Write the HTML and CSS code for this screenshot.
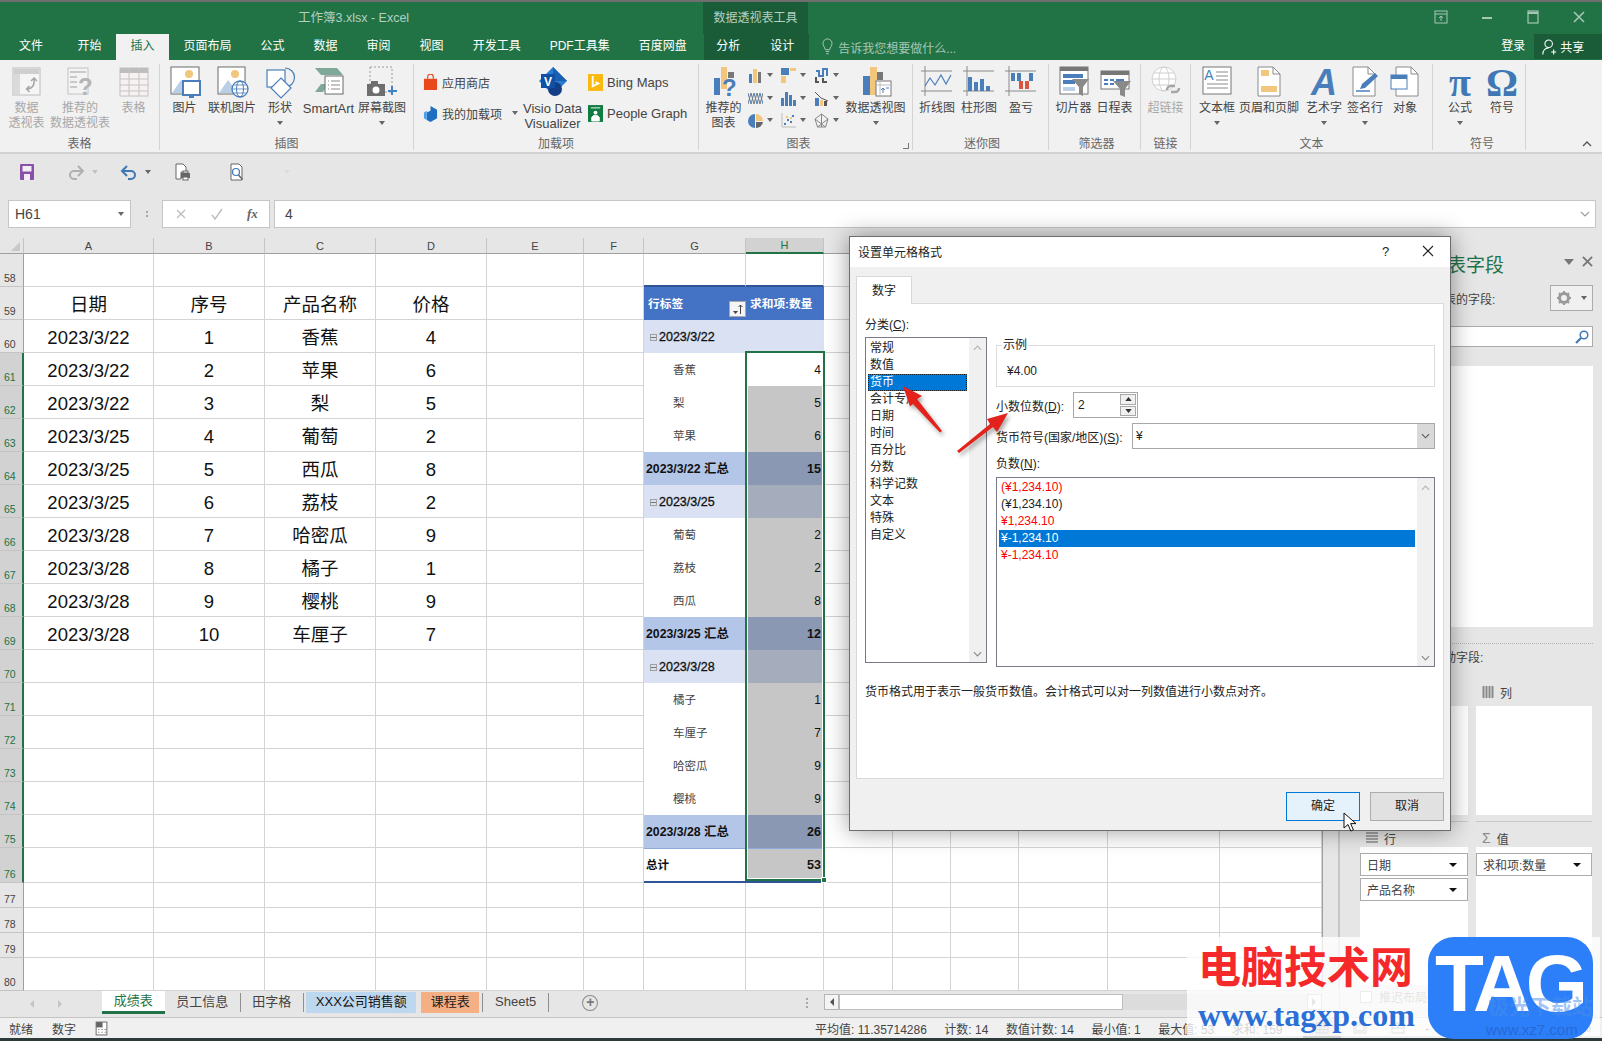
FILE: index.html
```html
<!DOCTYPE html>
<html lang="zh-CN">
<head>
    <meta charset="UTF-8">
    <title>工作簿3.xlsx - Excel</title>
    <link rel="stylesheet" href="styles.css">
</head>
<body>
<div class="titlebar">
    <div class="doc-title">工作簿3.xlsx - Excel</div>
    <div class="tool-label">数据透视表工具</div>
    <div class="win-btns">
        <svg viewBox="0 0 14 14"><rect x="1" y="1" width="12" height="12" fill="none" stroke="#a5c7b4"/><path d="M1 4h12M7 11V6M5 8l2-2 2 2" fill="none" stroke="#a5c7b4"/></svg>
        <svg viewBox="0 0 14 14"><path d="M2 8h10" stroke="#a5c7b4" stroke-width="2"/></svg>
        <svg viewBox="0 0 14 14"><rect x="2" y="1" width="10" height="12" fill="none" stroke="#a5c7b4" stroke-width="1.2"/><path d="M2 3h10" stroke="#a5c7b4" stroke-width="2"/></svg>
        <svg viewBox="0 0 14 14"><path d="M2 2l10 10M12 2L2 12" stroke="#a5c7b4" stroke-width="1.6"/></svg>
    </div>
</div>
<div class="tabbar">
    <div class="tab">文件</div>
    <div class="tab tab-first">开始</div>
    <div class="tab tab-on">插入</div>
    <div class="tab">页面布局</div>
    <div class="tab">公式</div>
    <div class="tab">数据</div>
    <div class="tab">审阅</div>
    <div class="tab">视图</div>
    <div class="tab">开发工具</div>
    <div class="tab">PDF工具集</div>
    <div class="tab">百度网盘</div>
    <div class="tab-tools"><div class="tab">分析</div><div class="tab">设计</div></div>
    <div class="tell-me">
        <svg viewBox="0 0 12 20"><path d="M3.500 13C3 10 1 9 1 6a5 5 0 0 1 10 0c0 3-2 4-2.500 7zM4 15h4M4.500 17.500h3" fill="none" stroke="#a5c7b4" stroke-width="1.100"/></svg>
        告诉我您想要做什么...
    </div>
    <div class="login">登录</div>
    <div class="share">
        <svg viewBox="0 0 18 20"><circle cx="8" cy="6" r="4.500" fill="none" stroke="#fff" stroke-width="1.300"/><path d="M1 19c0-5 3-8 7-8M11 16h6M14 13v6" fill="none" stroke="#fff" stroke-width="1.300"/></svg>
        共享
    </div>
</div>

<div class="ribbon">
    <div class="group grp-tables">
        <div class="btns">
            <div class="big off">
                <svg class="ico" viewBox="0 0 34 32"><rect x="3" y="2" width="27" height="27" fill="#f5f5f5" stroke="#bcbcbc"/><rect x="4" y="3" width="25" height="5" fill="#cfcfcf"/><rect x="4" y="8" width="6" height="20" fill="#dadada"/><path d="M24 13c1 6-2 10-7 10m2.500-3-3 3 3 3M21 15l3-3 3 3" fill="none" stroke="#a6a6a6" stroke-width="1.500"/></svg>
                <span>数据<br>透视表</span>
            </div>
            <div class="big off">
                <svg class="ico" viewBox="0 0 34 32"><rect x="5" y="2" width="20" height="26" fill="#f3f3f3" stroke="#c4c4c4"/><path d="M7 6h16M7 11h7M7 16h7M7 21h7" stroke="#c9c9c9" stroke-width="2"/><text x="15" y="29" class="ico-q off-q">?</text></svg>
                <span>推荐的<br>数据透视表</span>
            </div>
            <div class="big off">
                <svg class="ico" viewBox="0 0 34 32"><rect x="3" y="2" width="28" height="28" fill="#f6f2f2" stroke="#c2c2c2"/><rect x="3" y="2" width="28" height="5" fill="#bdbdbd"/><path d="M3 13h28M3 19h28M3 25h28M12 2v28M22 2v28" stroke="#c9c2c2"/></svg>
                <span>表格</span>
            </div>
        </div>
        <div class="group-name">表格</div>
    </div>
    <div class="group grp-illus">
        <div class="btns">
            <div class="big">
                <svg class="ico" viewBox="0 0 34 32"><rect x="3" y="1" width="28" height="27" fill="#fff" stroke="#6b6b6b"/><circle cx="21" cy="8" r="4" fill="#f2c77d"/><path d="M4 27l9-13 7 9 4-3 5 7z" fill="#b9cfe6"/><rect x="15" y="15" width="17" height="14" fill="#fff" stroke="#4a7ebb" stroke-width="2"/><path d="M21 31h5" stroke="#4a7ebb" stroke-width="2"/></svg>
                <span>图片</span>
            </div>
            <div class="big">
                <svg class="ico" viewBox="0 0 34 32"><rect x="3" y="1" width="27" height="27" fill="#fff" stroke="#6b6b6b"/><circle cx="20" cy="8" r="4" fill="#f2c77d"/><path d="M4 27l9-13 7 9 4-3 5 7z" fill="#b9cfe6"/><circle cx="25" cy="23" r="8" fill="#fff" stroke="#4a7ebb" stroke-width="1.300"/><ellipse cx="25" cy="23" rx="3.500" ry="8" fill="none" stroke="#4a7ebb"/><path d="M17 23h16M18 19h14M18 27h14" stroke="#4a7ebb" stroke-width=".8"/></svg>
                <span>联机图片</span>
            </div>
            <div class="big">
                <svg class="ico" viewBox="0 0 34 32"><rect x="4" y="4" width="18" height="17" fill="#fff" stroke="#4a7ebb" stroke-width="1.200"/><path d="M22 2a9.500 9.500 0 1 1 0 19" fill="none" stroke="#4a7ebb" stroke-width="1.200"/><path d="M18 12l10 10-10 10-10-10z" fill="#fff" stroke="#4a7ebb" stroke-width="1.200"/></svg>
                <span>形状</span><i class="caret"></i>
            </div>
            <div class="big">
                <svg class="ico" viewBox="0 0 34 32"><path d="M3 2h22l6 7H9zM3 26h8l5-8H9z" fill="#7ea998"/><rect x="13" y="10" width="18" height="18" fill="#fff" stroke="#6b6b6b"/><path d="M19 15h9M19 19h9M19 23h9M16 15h1M16 19h1M16 23h1" stroke="#8a8a8a"/></svg>
                <span class="latin">SmartArt</span>
            </div>
            <div class="big">
                <svg class="ico" viewBox="0 0 34 32"><rect x="5" y="1" width="22" height="25" fill="none" stroke="#9a9a9a" stroke-dasharray="2 2"/><rect x="2" y="18" width="18" height="12" fill="#6e6e6e"/><rect x="6" y="15" width="7" height="4" fill="#6e6e6e"/><circle cx="11" cy="24" r="3.500" fill="#fff"/><path d="M27 20v9M23 25h9" stroke="#3f83c6" stroke-width="2"/></svg>
                <span>屏幕截图</span><i class="caret"></i>
            </div>
        </div>
        <div class="group-name">插图</div>
    </div>
    <div class="group grp-addins">
        <div class="btns">
            <div class="small-col">
                <div class="small"><svg viewBox="0 0 16 18"><path d="M1 5h14v12H1z" fill="#e8481c"/><path d="M5 5V3a3 3 0 0 1 6 0v2" fill="none" stroke="#e8481c" stroke-width="1.300"/></svg>应用商店</div>
                <div class="small"><svg viewBox="0 0 16 18"><path d="M8 1l7 4v9l-7 4-4-2V8l4-2z" fill="#1e6fc0"/><path d="M1 8l3-2v10l-3-2z" fill="#4ea1e8"/></svg>我的加载项<i class="caret caret-side"></i></div>
            </div>
            <div class="big big-visio">
                <svg class="ico" viewBox="0 0 34 32"><path d="M17 1l14 14-14 14L3 15z" fill="#2a7cd3"/><path d="M17 1l14 14h-14z" fill="#1b5fb0"/><circle cx="19" cy="23" r="7" fill="#133e87"/><rect x="5" y="8" width="14" height="14" fill="#0f4fa5"/><text x="12" y="20" class="ico-v">V</text></svg>
                <span class="latin">Visio Data<br>Visualizer</span>
            </div>
            <div class="small-col small-col-2">
                <div class="small latin"><svg viewBox="0 0 16 18"><rect width="16" height="18" fill="#f9b90e"/><path d="M5 2v11l6-3-3-1.500" fill="none" stroke="#fff" stroke-width="2"/></svg>Bing Maps</div>
                <div class="small latin"><svg viewBox="0 0 16 18"><rect width="16" height="18" fill="#107c41"/><circle cx="8" cy="8" r="2" fill="#fff"/><path d="M4 17v-4l2-2h4l2 2v4zM3 3h10" stroke="#fff" fill="#fff"/></svg>People Graph</div>
            </div>
        </div>
        <div class="group-name">加载项</div>
    </div>
    <div class="group grp-charts">
        <div class="btns">
            <div class="big">
                <svg class="ico" viewBox="0 0 34 32"><rect x="7" y="12" width="6" height="17" fill="#4a7ebb"/><rect x="14" y="1" width="6" height="22" fill="#f2c77d"/><rect x="21" y="6" width="6" height="6" fill="#777"/><text x="15" y="30" class="ico-q">?</text></svg>
                <span>推荐的<br>图表</span>
            </div>
            <div class="chart-grid">
                <div class="mini"><svg viewBox="0 0 15 15"><rect x="1" y="6" width="3" height="9" fill="#4a7ebb"/><rect x="5" y="1" width="4" height="14" fill="#f2c77d"/><rect x="10" y="4" width="3" height="11" fill="#777"/></svg><i class="caret"></i></div>
                <div class="mini"><svg viewBox="0 0 15 15"><rect x="0" y="0" width="8" height="7" fill="#4a7ebb"/><rect x="9" y="0" width="6" height="3" fill="#f2c77d"/><rect x="0" y="8" width="5" height="7" fill="#f2c77d"/></svg><i class="caret"></i></div>
                <div class="mini"><svg viewBox="0 0 15 15"><path d="M2 3h3v5h4V1h4v7" fill="none" stroke="#4a7ebb" stroke-width="2"/><path d="M2 9v5h3M9 10v4h4" fill="none" stroke="#555" stroke-width="2"/></svg><i class="caret"></i></div>
                <div class="mini"><svg viewBox="0 0 15 15"><path d="M0 2l3 11 3-11 3 11 3-11 3 11" fill="none" stroke="#4a7ebb"/><path d="M0 13l3-11 3 11 3-11 3 11 3-11" fill="none" stroke="#777"/></svg><i class="caret"></i></div>
                <div class="mini"><svg viewBox="0 0 15 15"><rect x="0" y="7" width="3" height="8" fill="#4a7ebb"/><rect x="4" y="1" width="3" height="14" fill="#4a7ebb"/><rect x="8" y="4" width="3" height="11" fill="#4a7ebb"/><rect x="12" y="9" width="3" height="6" fill="#4a7ebb"/></svg><i class="caret"></i></div>
                <div class="mini"><svg viewBox="0 0 15 15"><path d="M1 1l6 6 7 3" stroke="#555" fill="none"/><rect x="1" y="7" width="4" height="8" fill="#4a7ebb"/><rect x="6" y="9" width="3" height="6" fill="#f2c77d"/><rect x="10" y="10" width="3" height="5" fill="#555"/></svg><i class="caret"></i></div>
                <div class="mini"><svg viewBox="0 0 15 15"><path d="M7 1a7 7 0 0 0 0 14z" fill="#4a7ebb"/><path d="M8 1a7 7 0 0 1 7 7H8z" fill="#f2c77d"/><path d="M8 9h7a7 7 0 0 1-7 6z" fill="#666"/></svg><i class="caret"></i></div>
                <div class="mini"><svg viewBox="0 0 15 15"><path d="M1 0v14h14" fill="none" stroke="#bbb"/><path d="M3 11h2M6 7h2M9 9h2M11 3h2" stroke="#4a7ebb" stroke-width="2"/><path d="M5 4h2M9 5h2" stroke="#f2c77d" stroke-width="2"/></svg><i class="caret"></i></div>
                <div class="mini"><svg viewBox="0 0 15 15"><path d="M7.500 1l6.500 5-2.500 8h-8L1 6zM7.500 1v13M1 6l10.500 8M14 6L3.500 14" fill="none" stroke="#888"/></svg><i class="caret"></i></div>
            </div>
            <div class="big">
                <svg class="ico" viewBox="0 0 34 32"><rect x="4" y="10" width="7" height="19" fill="#4a7ebb"/><rect x="11" y="1" width="7" height="28" fill="#f2c77d"/><rect x="18" y="6" width="6" height="8" fill="#777"/><rect x="17" y="15" width="15" height="15" fill="#fff" stroke="#777"/><path d="M17 19h15M21 15v15" stroke="#bbb"/><path d="M24 27v-5m-2 2l2-2 2 2M27 22h3" fill="none" stroke="#4a7ebb"/></svg>
                <span>数据透视图</span><i class="caret"></i>
            </div>
        </div>
        <div class="group-name">图表<i class="launcher"></i></div>
    </div>
    <div class="group grp-spark">
        <div class="btns">
            <div class="big">
                <svg class="ico" viewBox="0 0 34 32"><path d="M1 5h31M1 25h31M5 0v30" stroke="#8a8a8a"/><path d="M5 20l5-8 5 7 6-10 5 9 5-9" fill="none" stroke="#4a7ebb" stroke-width="1.200"/></svg>
                <span>折线图</span>
            </div>
            <div class="big">
                <svg class="ico" viewBox="0 0 34 32"><path d="M1 5h31M1 25h31M5 0v30" stroke="#8a8a8a"/><rect x="6" y="11" width="4" height="14" fill="#4a7ebb"/><rect x="12" y="16" width="4" height="9" fill="#4a7ebb"/><rect x="18" y="13" width="4" height="12" fill="#4a7ebb"/><rect x="24" y="20" width="4" height="5" fill="#4a7ebb"/></svg>
                <span>柱形图</span>
            </div>
            <div class="big">
                <svg class="ico" viewBox="0 0 34 32"><path d="M1 5h31M1 25h31M5 0v30" stroke="#8a8a8a"/><rect x="7" y="7" width="4" height="8" fill="#4a7ebb"/><rect x="13" y="7" width="4" height="8" fill="#4a7ebb"/><rect x="25" y="7" width="4" height="8" fill="#4a7ebb"/><rect x="15" y="15" width="4" height="8" fill="#d9553c"/><rect x="21" y="15" width="4" height="8" fill="#d9553c"/></svg>
                <span>盈亏</span>
            </div>
        </div>
        <div class="group-name">迷你图</div>
    </div>
    <div class="group grp-filter">
        <div class="btns">
            <div class="big">
                <svg class="ico" viewBox="0 0 34 32"><rect x="3" y="1" width="28" height="27" fill="#fff" stroke="#777"/><rect x="3" y="1" width="28" height="4" fill="#777"/><rect x="6" y="8" width="20" height="4" fill="#4a7ebb"/><rect x="6" y="14" width="12" height="4" fill="#4a7ebb"/><rect x="6" y="21" width="12" height="4" fill="#bcd0e8"/><path d="M15 13h17l-6 8v9l-4-2v-7z" fill="#8a8a8a"/></svg>
                <span>切片器</span>
            </div>
            <div class="big">
                <svg class="ico" viewBox="0 0 34 32"><rect x="3" y="5" width="28" height="18" fill="#fff" stroke="#777"/><rect x="3" y="5" width="28" height="4" fill="#777"/><path d="M6 14h4M12 14h4M18 14h8M6 18h4M12 18h4" stroke="#4a7ebb" stroke-width="2"/><path d="M15 15h18l-6 8v8l-5-2v-6z" fill="#8a8a8a"/></svg>
                <span>日程表</span>
            </div>
        </div>
        <div class="group-name">筛选器</div>
    </div>
    <div class="group grp-link">
        <div class="btns">
            <div class="big off">
                <svg class="ico" viewBox="0 0 34 32"><circle cx="15" cy="13" r="12" fill="#fff" stroke="#cfcfcf"/><ellipse cx="15" cy="13" rx="5" ry="12" fill="none" stroke="#cfcfcf"/><path d="M3 13h24M5 7h20M5 19h20" stroke="#cfcfcf"/><path d="M18 24a4 4 0 0 1 4-4h4M30 22a4 4 0 0 1-4 4h-4" fill="none" stroke="#a6a6a6" stroke-width="2.500"/></svg>
                <span>超链接</span>
            </div>
        </div>
        <div class="group-name">链接</div>
    </div>
    <div class="group grp-text">
        <div class="btns">
            <div class="big">
                <svg class="ico" viewBox="0 0 34 32"><rect x="3" y="1" width="28" height="27" fill="#fff" stroke="#777"/><text x="9" y="14" class="ico-a">A</text><path d="M16 6h12M16 10h12M16 14h12M7 18h21M7 22h21" stroke="#8a8a8a"/></svg>
                <span>文本框</span><i class="caret"></i>
            </div>
            <div class="big">
                <svg class="ico" viewBox="0 0 34 32"><path d="M6 1h15l7 7v22H6z" fill="#fff" stroke="#8a8a8a"/><path d="M21 1v7h7" fill="none" stroke="#8a8a8a"/><rect x="9" y="4" width="8" height="6" fill="#f2c77d"/><rect x="9" y="20" width="16" height="6" fill="#f2c77d"/></svg>
                <span>页眉和页脚</span>
            </div>
            <div class="big">
                <svg class="ico" viewBox="0 0 34 32"><text x="17" y="29" class="ico-art">A</text></svg>
                <span>艺术字</span><i class="caret"></i>
            </div>
            <div class="big">
                <svg class="ico" viewBox="0 0 34 32"><path d="M5 1h15l7 7v22H5z" fill="#fff" stroke="#8a8a8a"/><path d="M20 1v7h7" fill="none" stroke="#8a8a8a"/><path d="M8 25h14" stroke="#4a7ebb" stroke-width="1.500"/><path d="M12 23l2-5L27 7l3 3-13 12z" fill="#4a7ebb"/></svg>
                <span>签名行</span><i class="caret"></i>
            </div>
            <div class="big">
                <svg class="ico" viewBox="0 0 34 32"><path d="M8 1h15l7 7v22H8z" fill="#fff" stroke="#8a8a8a"/><path d="M23 1v7h7" fill="none" stroke="#8a8a8a"/><rect x="3" y="9" width="16" height="14" fill="#fff" stroke="#4a7ebb"/><rect x="3" y="9" width="16" height="4" fill="#4a7ebb"/></svg>
                <span>对象</span>
            </div>
        </div>
        <div class="group-name">文本</div>
    </div>
    <div class="group grp-symbol">
        <div class="btns">
            <div class="big"><div class="glyph">π</div><span>公式</span><i class="caret"></i></div>
            <div class="big"><div class="glyph">Ω</div><span>符号</span></div>
        </div>
        <div class="group-name">符号</div>
    </div>
    <svg class="collapse" viewBox="0 0 10 6"><path d="M1 5l4-4 4 4" fill="none" stroke="#555" stroke-width="1.300"/></svg>
</div>

<div class="qat">
    <svg class="qat-save" viewBox="0 0 18 18"><rect x="2" y="1" width="14" height="16" rx="1" fill="#8a4fa8"/><rect x="4.500" y="3" width="9" height="5.500" fill="#f3eef6"/><rect x="6" y="11" width="6" height="6" fill="#f3eef6"/></svg>
    <svg class="qat-redo" viewBox="0 0 18 18"><path d="M15 8H7a4 4 0 0 0 0 8h3M11 3l5 5-5 5" fill="none" stroke="#b0b0b0" stroke-width="2"/></svg>
    <i class="caret qat-c1 caret-light"></i>
    <svg class="qat-undo" viewBox="0 0 18 18"><path d="M3 8h8a4 4 0 0 1 0 8H8M7 3L2 8l5 5" fill="none" stroke="#3f78b5" stroke-width="2"/></svg>
    <i class="caret qat-c2"></i>
    <svg class="qat-print" viewBox="0 0 18 18"><path d="M3 1h7l3 3v5H8v7H3z" fill="#fff" stroke="#666"/><rect x="8" y="10" width="9" height="5" fill="#666"/><rect x="10" y="8" width="5" height="2" fill="#fff" stroke="#666"/><rect x="10" y="14" width="5" height="3" fill="#fff" stroke="#666"/></svg>
    <svg class="qat-view" viewBox="0 0 18 18"><path d="M3 1h8l3 3v13H3z" fill="#fff" stroke="#666"/><circle cx="8" cy="9" r="3.500" fill="none" stroke="#3f78b5" stroke-width="1.200"/><path d="M10.500 12l4 4.500" stroke="#666" stroke-width="1.500"/></svg>
    <i class="caret qat-c3 caret-faint"></i>
</div>

<div class="formula">
    <div class="namebox">H61<i class="caret"></i></div>
    <div class="fdots"></div>
    <div class="fbtns">
        <svg viewBox="0 0 12 12"><path d="M2 2l8 8M10 2l-8 8" stroke="#bdbdbd" stroke-width="1.400"/></svg>
        <svg viewBox="0 0 12 12"><path d="M1 7l3 4 7-10" fill="none" stroke="#bdbdbd" stroke-width="1.400"/></svg>
        <span class="fx">fx</span>
    </div>
    <div class="finput">4<svg viewBox="0 0 10 6"><path d="M1 1l4 4 4-4" fill="none" stroke="#9c9c9c" stroke-width="1.200"/></svg></div>
</div>

<div class="work">
    <div class="book">
        <div class="grid-row">
            <div class="sheet-wrap">
                <table class="sheet">
                    <colgroup><col class="c-h"><col class="c-a"><col class="c-b"><col class="c-b"><col class="c-b"><col class="c-e"><col class="c-f"><col class="c-g"><col class="c-hh"><col class="c-i"><col class="c-j"><col class="c-k"><col class="c-l"><col class="c-m"><col class="c-n"></colgroup>
                    <thead>
                        <tr><th class="corner"><i></i></th><th>A</th><th>B</th><th>C</th><th>D</th><th>E</th><th>F</th><th>G</th><th class="col-on">H</th><th>I</th><th>J</th><th>K</th><th>L</th><th>M</th><th>N</th></tr>
                    </thead>
                    <tbody>
                        <tr><th>58</th><td></td><td></td><td></td><td></td><td></td><td></td><td class="pv-top"></td><td class="pv-top"></td><td></td><td colspan="5"></td></tr>
                        <tr><th>59</th><td class="hd">日期</td><td class="hd">序号</td><td class="hd">产品名称</td><td class="hd">价格</td><td></td><td></td><td class="pv pv-head">行标签</td><td class="pv pv-head">求和项:数量</td><td></td><td colspan="5"></td></tr>
                        <tr><th>60</th><td>2023/3/22</td><td>1</td><td>香蕉</td><td>4</td><td></td><td></td><td class="pv pv-group"><i class="minus"></i>2023/3/22</td><td class="pv pv-group"></td><td></td><td colspan="5"></td></tr>
                        <tr><th class="on">61</th><td>2023/3/22</td><td>2</td><td>苹果</td><td>6</td><td></td><td></td><td class="pv pv-item">香蕉</td><td class="pv num">4</td><td></td><td colspan="5"></td></tr>
                        <tr><th class="on">62</th><td>2023/3/22</td><td>3</td><td>梨</td><td>5</td><td></td><td></td><td class="pv pv-item">梨</td><td class="pv num dim">5</td><td></td><td colspan="5"></td></tr>
                        <tr><th class="on">63</th><td>2023/3/25</td><td>4</td><td>葡萄</td><td>2</td><td></td><td></td><td class="pv pv-item">苹果</td><td class="pv num dim">6</td><td></td><td colspan="5"></td></tr>
                        <tr><th class="on">64</th><td>2023/3/25</td><td>5</td><td>西瓜</td><td>8</td><td></td><td></td><td class="pv pv-sub">2023/3/22 汇总</td><td class="pv num dim-sub">15</td><td></td><td colspan="5"></td></tr>
                        <tr><th class="on">65</th><td>2023/3/25</td><td>6</td><td>荔枝</td><td>2</td><td></td><td></td><td class="pv pv-group"><i class="minus"></i>2023/3/25</td><td class="pv dim-group"></td><td></td><td colspan="5"></td></tr>
                        <tr><th class="on">66</th><td>2023/3/28</td><td>7</td><td>哈密瓜</td><td>9</td><td></td><td></td><td class="pv pv-item">葡萄</td><td class="pv num dim">2</td><td></td><td colspan="5"></td></tr>
                        <tr><th class="on">67</th><td>2023/3/28</td><td>8</td><td>橘子</td><td>1</td><td></td><td></td><td class="pv pv-item">荔枝</td><td class="pv num dim">2</td><td></td><td colspan="5"></td></tr>
                        <tr><th class="on">68</th><td>2023/3/28</td><td>9</td><td>樱桃</td><td>9</td><td></td><td></td><td class="pv pv-item">西瓜</td><td class="pv num dim">8</td><td></td><td colspan="5"></td></tr>
                        <tr><th class="on">69</th><td>2023/3/28</td><td>10</td><td>车厘子</td><td>7</td><td></td><td></td><td class="pv pv-sub">2023/3/25 汇总</td><td class="pv num dim-sub">12</td><td></td><td colspan="5"></td></tr>
                        <tr><th class="on">70</th><td></td><td></td><td></td><td></td><td></td><td></td><td class="pv pv-group"><i class="minus"></i>2023/3/28</td><td class="pv dim-group"></td><td></td><td colspan="5"></td></tr>
                        <tr><th class="on">71</th><td></td><td></td><td></td><td></td><td></td><td></td><td class="pv pv-item">橘子</td><td class="pv num dim">1</td><td></td><td colspan="5"></td></tr>
                        <tr><th class="on">72</th><td></td><td></td><td></td><td></td><td></td><td></td><td class="pv pv-item">车厘子</td><td class="pv num dim">7</td><td></td><td colspan="5"></td></tr>
                        <tr><th class="on">73</th><td></td><td></td><td></td><td></td><td></td><td></td><td class="pv pv-item">哈密瓜</td><td class="pv num dim">9</td><td></td><td colspan="5"></td></tr>
                        <tr><th class="on">74</th><td></td><td></td><td></td><td></td><td></td><td></td><td class="pv pv-item">樱桃</td><td class="pv num dim">9</td><td></td><td colspan="5"></td></tr>
                        <tr><th class="on">75</th><td></td><td></td><td></td><td></td><td></td><td></td><td class="pv pv-sub">2023/3/28 汇总</td><td class="pv num dim-sub">26</td><td></td><td></td><td></td><td></td><td></td><td></td></tr>
                        <tr><th class="on">76</th><td></td><td></td><td></td><td></td><td></td><td></td><td class="pv pv-total">总计</td><td class="pv num dim pv-total">53</td><td></td><td></td><td></td><td></td><td></td><td></td></tr>
                        <tr class="low"><th>77</th><td></td><td></td><td></td><td></td><td></td><td></td><td></td><td></td><td></td><td></td><td></td><td></td><td></td><td></td></tr>
                        <tr class="low"><th>78</th><td></td><td></td><td></td><td></td><td></td><td></td><td></td><td></td><td></td><td></td><td></td><td></td><td></td><td></td></tr>
                        <tr class="low"><th>79</th><td></td><td></td><td></td><td></td><td></td><td></td><td></td><td></td><td></td><td></td><td></td><td></td><td></td><td></td></tr>
                        <tr><th>80</th><td></td><td></td><td></td><td></td><td></td><td></td><td></td><td></td><td></td><td></td><td></td><td></td><td></td><td></td></tr>
                    </tbody>
                </table>
                <div class="filter-btn"><svg viewBox="0 0 15 14"><path d="M3 9h5l-2.500 3z" fill="#444"/><path d="M10.500 12V3M8.500 5l2-2 2 2" fill="none" stroke="#444"/></svg></div>
                <div class="selection"><i></i></div>
            </div>
            <div class="vscroll"><svg viewBox="0 0 10 6"><path d="M1 1h8L5 5z" fill="#b5b5b5"/></svg></div>
        </div>
        <div class="sheets">
            <div class="sheet-nav"><svg viewBox="0 0 6 10"><path d="M5 1v8L1 5z" fill="#c4c4c4"/></svg><svg viewBox="0 0 6 10"><path d="M1 1v8l4-4z" fill="#c4c4c4"/></svg></div>
            <div class="stab stab-on">成绩表</div>
            <div class="stab stab-line">员工信息</div>
            <div class="stab stab-line">田字格</div>
            <div class="stab stab-blue">XXX公司销售额</div>
            <div class="stab stab-orange">课程表</div>
            <div class="stab stab-line stab-left">Sheet5</div>
            <div class="stab-add">+</div>
            <div class="hdots"></div>
            <div class="hscroll">
                <div class="harrow"><svg viewBox="0 0 6 10"><path d="M5 1v8L1 5z" fill="#555"/></svg></div>
                <div class="hthumb"></div>
                <div class="harrow harrow-end"><svg viewBox="0 0 6 10"><path d="M1 1v8l4-4z" fill="#888"/></svg></div>
            </div>
        </div>
    </div>
    <div class="pane">
        <div class="pane-head"><div class="pane-title">数据透视表字段</div><i class="caret caret-big"></i><svg class="pane-x" viewBox="0 0 12 12"><path d="M1 1l10 10M11 1L1 11" stroke="#777" stroke-width="2"/></svg></div>
        <div class="pane-row">
            <span>选择要添加到报表的字段:</span>
            <div class="gear"><svg viewBox="0 0 14 14"><circle cx="7" cy="7" r="4.500" fill="none" stroke="#9a9a9a" stroke-width="3"/><path d="M7 0v3M7 11v3M0 7h3M11 7h3M2 2l2 2M10 10l2 2M12 2l-2 2M4 10l-2 2" stroke="#9a9a9a" stroke-width="2"/></svg><i class="caret"></i></div>
        </div>
        <div class="pane-search"><svg viewBox="0 0 14 14"><circle cx="9" cy="5" r="3.800" fill="none" stroke="#3f78b5" stroke-width="1.500"/><path d="M6 8l-5 5" stroke="#3f78b5" stroke-width="2.200"/></svg></div>
        <div class="pane-list"></div>
        <div class="pane-drag">在以下区域间拖动字段:</div>
        <div class="zones">
            <div class="zone">
                <div class="zone-label">筛选</div>
                <div class="zone-box"></div>
            </div>
            <div class="zone">
                <div class="zone-label"><svg viewBox="0 0 12 14"><path d="M1.500 1v12M4.500 1v12M7.500 1v12M10.500 1v12" stroke="#8a8a8a" stroke-width="2"/></svg>列</div>
                <div class="zone-box"></div>
            </div>
            <div class="zone zone-low">
                <div class="zone-label"><svg viewBox="0 0 12 14"><path d="M0 2h12M0 5h12M0 8h12M0 11h12" stroke="#8a8a8a" stroke-width="1.400"/></svg>行</div>
                <div class="zone-box tall">
                    <div class="pill">日期<i class="caret caret-dark"></i></div>
                    <div class="pill">产品名称<i class="caret caret-dark"></i></div>
                </div>
            </div>
            <div class="zone zone-low">
                <div class="zone-label"><span class="sigma">Σ</span>值</div>
                <div class="zone-box tall">
                    <div class="pill">求和项:数量<i class="caret caret-dark"></i></div>
                </div>
            </div>
        </div>
        <div class="pane-foot"><i class="check"></i>推迟布局更新</div>
    </div>
</div>

<div class="status">
    <div class="status-left">
        <span>就绪</span><span>数字</span>
        <svg viewBox="0 0 12 14"><rect x="1" y="1" width="10" height="12" fill="#fff" stroke="#777"/><rect x="1" y="1" width="6" height="5" fill="#666"/><path d="M3 8h1M6 8h1M9 8h1M3 10.500h1M6 10.500h1M9 10.500h1" stroke="#666"/></svg>
    </div>
    <div class="stats">
        <span>平均值: 11.35714286</span><span>计数: 14</span><span>数值计数: 14</span><span>最小值: 1</span><span>最大值: 53</span><span>求和: 159</span>
    </div>
    <div class="views">
        <div class="view view-on"><svg viewBox="0 0 14 12"><path d="M1 1h12v10H1zM1 4.300h12M1 7.600h12M5 1v10M9 1v10" fill="none" stroke="#777"/></svg></div>
        <div class="view"><svg viewBox="0 0 14 12"><path d="M1 1h12v10H1zM3 3h8v6H3z" fill="none" stroke="#777"/></svg></div>
        <div class="view"><svg viewBox="0 0 14 12"><path d="M1 1h12v10H1zM1 6h12M7 1v5" fill="none" stroke="#777"/></svg></div>
    </div>
    <div class="zoomer"><span>-</span><div class="zoom-track"><i></i></div><span>+</span><span class="zoom-pct">80%</span></div>
</div>
<div class="bottom-edge"></div>

<div class="dialog">
    <div class="dlg-title">
        <span>设置单元格格式</span>
        <b class="dlg-help">?</b>
        <svg viewBox="0 0 12 12"><path d="M1 1l10 10M11 1L1 11" stroke="#222" stroke-width="1.100"/></svg>
    </div>
    <div class="dlg-body">
        <div class="dlg-tab">数字</div>
        <div class="dlg-panel">
            <div class="dlg-cols">
                <div class="dlg-left">
                    <div class="dlg-label">分类(<u>C</u>):</div>
                    <div class="cat-list">
                        <ul>
                            <li>常规</li><li>数值</li><li class="sel dotted">货币</li><li>会计专用</li><li>日期</li><li>时间</li><li>百分比</li><li>分数</li><li>科学记数</li><li>文本</li><li>特殊</li><li>自定义</li>
                        </ul>
                        <div class="list-scroll"><svg viewBox="0 0 10 6"><path d="M1 5l4-4 4 4" fill="none" stroke="#b5b5b5" stroke-width="1.300"/></svg><svg viewBox="0 0 10 6"><path d="M1 1l4 4 4-4" fill="none" stroke="#8a8a8a" stroke-width="1.300"/></svg></div>
                    </div>
                </div>
                <div class="dlg-right">
                    <fieldset class="sample"><legend>示例</legend>¥4.00</fieldset>
                    <div class="form-row decimals">
                        <span>小数位数(<u>D</u>):</span>
                        <div class="spinner">2<div class="spin-btns"><i><svg viewBox="0 0 8 5"><path d="M4 0l4 5H0z" fill="#333"/></svg></i><i><svg viewBox="0 0 8 5"><path d="M4 5L0 0h8z" fill="#333"/></svg></i></div></div>
                    </div>
                    <div class="form-row symbol">
                        <span>货币符号(国家/地区)(<u>S</u>):</span>
                        <div class="select">¥<div class="select-btn"><svg viewBox="0 0 10 6"><path d="M1 1l4 4 4-4" fill="none" stroke="#555" stroke-width="1.200"/></svg></div></div>
                    </div>
                    <div class="dlg-label neg-label">负数(<u>N</u>):</div>
                    <div class="neg-list">
                        <ul>
                            <li class="red">(¥1,234.10)</li><li>(¥1,234.10)</li><li class="red">¥1,234.10</li><li class="sel">¥-1,234.10</li><li class="red">¥-1,234.10</li>
                        </ul>
                        <div class="list-scroll"><svg viewBox="0 0 10 6"><path d="M1 5l4-4 4 4" fill="none" stroke="#b5b5b5" stroke-width="1.300"/></svg><svg viewBox="0 0 10 6"><path d="M1 1l4 4 4-4" fill="none" stroke="#8a8a8a" stroke-width="1.300"/></svg></div>
                    </div>
                </div>
            </div>
            <div class="dlg-desc">货币格式用于表示一般货币数值。会计格式可以对一列数值进行小数点对齐。</div>
        </div>
        <div class="dlg-actions">
            <div class="btn btn-ok">确定</div>
            <div class="btn">取消</div>
        </div>
    </div>
</div>

<svg class="arrows" viewBox="0 0 125 80">
    <polygon points="8,6 27,16 22,19 47,51 45,52.500 18,24 15,26.500" fill="#e3231b"/>
    <polygon points="113,33 102,52 98,47 64,73 62,71 95,44 92,39" fill="#e3231b"/>
</svg>
<svg class="cursor" viewBox="0 0 14 21"><path d="M1 1v15l4-3.500 2.800 6.500 2.600-1.100-2.800-6.300H13z" fill="#fff" stroke="#111"/></svg>

<div class="watermark">
    <div class="wm-name">电脑技术网</div>
    <div class="wm-url">www.tagxp.com</div>
</div>
<div class="badge">
    TAG
    <div class="badge-cn">极光下载站</div>
    <div class="badge-url">www.xz7.com</div>
</div>
</body>
</html>
```
FILE: styles.css
```css
* {
    box-sizing: border-box;
}
html, body {
    margin: 0;
    padding: 0;
}
body {
    position: relative;
    width: 1602px;
    height: 1041px;
    overflow: hidden;
    background: #e6e6e6;
    color: #444;
    font-family: "Liberation Sans", "Noto Sans CJK SC", sans-serif;
    font-size: 12px;
}
i {
    font-style: normal;
}
.caret {
    display: block;
    width: 0;
    height: 0;
    border-left: 3px solid transparent;
    border-right: 3px solid transparent;
    border-top: 4px solid #666;
}

/* title and tabs */
.titlebar {
    position: relative;
    display: flex;
    height: 34px;
    background: #217346;
    border-top: 2px solid #6f6f6f;
}
.doc-title {
    width: 703px;
    padding-left: 298px;
    line-height: 32px;
    color: #b4d0c1;
    font-size: 12.5px;
}
.tool-label {
    width: 105px;
    background: #1b5c38;
    color: #b4d0c1;
    text-align: center;
    line-height: 32px;
}
.win-btns {
    display: flex;
    gap: 32px;
    margin-left: 626px;
    padding-top: 8px;
}
.win-btns svg {
    width: 14px;
    height: 14px;
}
.tabbar {
    display: flex;
    align-items: stretch;
    height: 26px;
    background: #217346;
    color: #fff;
}
.tabbar > * {
    flex: none;
}
.tab {
    padding: 0 14.5px;
    line-height: 25px;
    white-space: nowrap;
}
.tab:first-child {
    padding: 0 20px 0 19px;
}
.tab-on {
    background: #f1f1f1;
    color: #217346;
}
.tab-tools {
    display: flex;
    width: 105px;
    margin-left: 3px;
    padding-left: 12px;
    gap: 30px;
    background: #1b5c38;
}
.tab-tools .tab {
    padding: 0;
}
.tell-me {
    display: flex;
    align-items: center;
    gap: 5px;
    margin-left: 13px;
    width: 679px;
    color: #a5c7b4;
    white-space: nowrap;
}
.tell-me svg {
    width: 11px;
    height: 18px;
}
.login {
    width: 33px;
    padding-left: 0;
    line-height: 25px;
}
.share {
    display: flex;
    align-items: center;
    gap: 3px;
    width: 68px;
    height: 25px;
    padding-left: 8px;
    background: #1b5c38;
}
.share svg {
    width: 15px;
    height: 18px;
}

/* ribbon */
.ribbon {
    display: flex;
    position: relative;
    height: 94px;
    padding-top: 4px;
    background: #f1f1f1;
    border-bottom: 2px solid #d2d2d2;
}
.group {
    display: flex;
    flex-direction: column;
    height: 86px;
    padding-top: 2px;
    border-right: 1px solid #d4d4d4;
}
.grp-tables { width: 160px; }
.grp-illus { width: 254px; }
.grp-addins { width: 285px; }
.grp-charts { width: 214px; }
.grp-spark { width: 136px; padding-left: 3px; }
.grp-filter { width: 92px; padding-left: 4px; }
.grp-link { width: 50px; }
.grp-text { width: 242px; }
.grp-symbol { width: 93px; padding-left: 6px; }
.btns {
    display: grid;
    flex: none;
    height: 71px;
}
.grp-tables .btns { grid-template-columns: 53px 54px 53px; }
.grp-illus .btns { grid-template-columns: 49px 46px 50px 47px 60px; }
.grp-addins .btns { grid-template-columns: 116px 45px 1fr; }
.grp-charts .btns { grid-template-columns: 49px 99px 57px; }
.grp-spark .btns { grid-template-columns: 42px 42px 42px; }
.grp-filter .btns { grid-template-columns: 41px 41px; }
.grp-link .btns { grid-template-columns: 49px; }
.grp-text .btns { grid-template-columns: 52px 52px 58px 24px 56px; }
.grp-symbol .btns { grid-template-columns: 42px 42px; }
.big {
    display: flex;
    flex-direction: column;
    align-items: center;
    line-height: 15px;
    white-space: nowrap;
    text-align: center;
}
.big .caret {
    margin-top: 5px;
}
.ico {
    flex: none;
    width: 34px;
    height: 32px;
    margin-bottom: 3px;
    overflow: visible;
}
.off {
    color: #a8a8a8;
}
.latin {
    font-size: 13px;
}
.ico-q {
    font: bold 24px "Liberation Sans", sans-serif;
    fill: #4a7ebb;
}
.ico-q.off-q {
    fill: #b5b5b5;
}
.ico-v {
    font: bold 12px "Liberation Sans", sans-serif;
    fill: #fff;
    text-anchor: middle;
}
.ico-a {
    font: 14px "Liberation Sans", sans-serif;
    fill: #4a7ebb;
    text-anchor: middle;
}
.ico-art {
    font: italic bold 36px "Liberation Sans", sans-serif;
    fill: #4a7ebb;
    text-anchor: middle;
}
.glyph {
    height: 35px;
    color: #3f78b5;
    font: bold 40px/34px "Liberation Serif", serif;
}
.small-col {
    display: flex;
    flex-direction: column;
    gap: 15px;
    padding: 8px 0 0 9px;
}
.small-col-2 {
    padding-left: 13px;
}
.small {
    display: flex;
    align-items: center;
    gap: 4px;
    height: 16px;
    white-space: nowrap;
}
.small svg {
    width: 15px;
    height: 17px;
    flex: none;
}
.caret-side {
    margin-left: 6px;
}
.chart-grid {
    display: grid;
    grid-template-columns: repeat(3, 33px);
    grid-auto-rows: 22.5px;
    padding-top: 2px;
}
.mini {
    display: flex;
    align-items: flex-start;
    gap: 4px;
}
.mini svg {
    width: 15px;
    height: 15px;
}
.mini .caret {
    margin-top: 5px;
}
.group-name {
    position: relative;
    flex: none;
    line-height: 15px;
    text-align: center;
    color: #666;
}
.grp-charts .group-name {
    padding-right: 14px;
}
.launcher {
    position: absolute;
    right: 3px;
    top: 6px;
    width: 6px;
    height: 6px;
    border-left: 1px solid #777;
    border-bottom: 1px solid #777;
    transform: scaleX(-1);
}
.collapse {
    position: absolute;
    right: 10px;
    bottom: 5px;
    width: 10px;
    height: 6px;
}

/* quick access */
.qat {
    display: flex;
    align-items: flex-start;
    height: 46px;
    padding-top: 9px;
}
.qat svg {
    width: 18px;
    height: 18px;
    flex: none;
}
.qat .caret {
    margin-top: 7px;
}
.qat-save { margin-left: 18px; }
.qat-redo { margin-left: 31px; }
.qat .qat-c1 { margin-left: 7px; }
.qat-undo { margin-left: 22px; }
.qat .qat-c2 { margin-left: 7px; }
.qat-print { margin-left: 22px; }
.qat-view { margin-left: 37px; }
.qat .qat-c3 { margin-left: 38px; }
.caret-light { border-top-color: #c2c2c2; }
.caret-faint { border-top-color: #dcdcdc; }

/* formula bar */
.formula {
    display: flex;
    height: 28px;
    padding-left: 8px;
}
.namebox, .fbtns, .finput {
    background: #fff;
    border: 1px solid #c6c6c6;
}
.namebox {
    display: flex;
    align-items: center;
    justify-content: space-between;
    width: 123px;
    padding: 0 6px;
    font-size: 14px;
    color: #444;
}
.fdots {
    width: 31px;
    margin: 10px 0;
    background: radial-gradient(circle, #a8a8a8 1px, transparent 1.200px) center top / 2px 4px repeat-y;
}
.fbtns {
    display: flex;
    align-items: center;
    width: 108px;
    padding-left: 12px;
    gap: 24px;
}
.fbtns svg {
    width: 12px;
    height: 12px;
}
.fx {
    color: #666;
    font: italic bold 13px "Liberation Serif", serif;
}
.finput {
    display: flex;
    align-items: center;
    justify-content: space-between;
    width: 1322px;
    margin-left: 4px;
    padding: 0 5px 0 10px;
    font-size: 14px;
}
.finput svg {
    width: 10px;
    height: 6px;
}

/* worksheet */
.work {
    display: flex;
    height: 779px;
    margin-top: 10px;
}
.book {
    display: flex;
    flex-direction: column;
    width: 1339px;
}
.grid-row {
    display: flex;
    height: 751px;
}
.sheet-wrap {
    position: relative;
    width: 1322px;
}
.sheet {
    table-layout: fixed;
    width: 1322px;
    border-collapse: separate;
    border-spacing: 0;
    background: #fff;
}
.c-h { width: 24px; }
.c-a { width: 130px; }
.c-b { width: 111px; }
.c-e { width: 97px; }
.c-f { width: 60px; }
.c-g { width: 102px; }
.c-hh { width: 78px; }
.c-i { width: 69px; }
.c-j { width: 58px; }
.c-k { width: 68px; }
.c-l { width: 89px; }
.c-m { width: 112px; }
.c-n { width: 102px; }
.sheet thead th {
    height: 15px;
    padding: 0;
    background: #e6e6e6;
    border-bottom: 1px solid #9f9f9f;
    border-right: 1px solid #c4c4c4;
    font: 11px/14px "Liberation Sans", sans-serif;
    color: #444;
}
.sheet thead .col-on {
    background: #d2d2d2;
    color: #217346;
    border-bottom: 2px solid #217346;
}
.corner {
    position: relative;
}
.corner i {
    position: absolute;
    right: 3px;
    bottom: 2px;
    width: 0;
    height: 0;
    border-left: 9px solid transparent;
    border-bottom: 9px solid #c8c8c8;
}
.sheet tbody th {
    height: 33px;
    padding: 0 0 0 4px;
    background: #e6e6e6;
    border-bottom: 1px solid #c4c4c4;
    border-right: 1px solid #9f9f9f;
    vertical-align: bottom;
    text-align: left;
    font: 10.5px/15px "Liberation Sans", sans-serif;
    color: #444;
}
.sheet tbody th.on {
    background: #d2d2d2;
    color: #217346;
    border-right: 2px solid #217346;
}
.sheet tbody .low th {
    height: 25px;
}
.sheet td {
    height: 33px;
    padding: 3px 0 0;
    border-bottom: 1px solid #d4d4d4;
    border-right: 1px solid #d4d4d4;
    text-align: center;
    color: #111;
    font: 18.5px/29px "Liberation Sans", "Noto Sans CJK SC", sans-serif;
    overflow: hidden;
    white-space: nowrap;
}
.low td {
    height: 25px;
}
.sheet td.pv-top {
    border-bottom: 2px solid #2f5597;
}
.sheet .pv {
    padding: 0 3px;
    border-bottom: 0;
    border-right: 0;
    text-align: left;
    font-size: 12.5px;
    font-weight: bold;
    line-height: 32px;
}
.sheet .pv-head {
    background: #4472c4;
    color: #fff;
    font-size: 11.7px;
    padding-left: 4px;
}
.sheet .pv-group {
    background: #d9e1f2;
    font-weight: normal;
    -webkit-text-stroke: .3px #111;
}
.sheet .pv-group i.minus {
    display: inline-block;
    width: 7px;
    height: 7px;
    margin: 0 2px 0 3px;
    border: 1px solid #a0a0a0;
    background: linear-gradient(#777, #777) center / 5px 1px no-repeat;
}
.sheet .pv-item {
    padding-left: 29px;
    color: #444;
    font-size: 11.5px;
    font-weight: normal;
}
.sheet .pv-sub {
    background: #b4c6e7;
    font-size: 12.3px;
    padding-left: 2px;
}
.sheet .pv-total {
    padding-left: 2px;
    font-size: 11.5px;
    border-top: 1px solid #8ea9db;
    border-bottom: 2px solid #2f5597;
}
.sheet .num {
    padding-right: 3px;
    text-align: right;
    font-weight: normal;
    font-size: 12px;
}
.sheet .dim { background: #c6c6c6; }
.sheet .dim-sub { background: #8b98b3; font-weight: bold; font-size: 12.5px; }
.sheet .dim-group { background: #a5acbb; }
.sheet .pv-total.num { font-weight: bold; font-size: 12.5px; }
.filter-btn {
    position: absolute;
    left: 729px;
    top: 63px;
    width: 17px;
    height: 16px;
    background: #f4f4f4;
    border: 1px solid #a8a8a8;
}
.filter-btn svg {
    display: block;
    width: 15px;
    height: 14px;
}
.selection {
    position: absolute;
    left: 745px;
    top: 113px;
    width: 80px;
    height: 530px;
    border: 2px solid #217346;
    box-shadow: inset 0 0 0 1px #fff;
}
.selection i {
    position: absolute;
    right: -4px;
    bottom: -4px;
    width: 6px;
    height: 6px;
    background: #217346;
    border: 1px solid #fff;
}
.vscroll {
    display: flex;
    align-items: flex-end;
    justify-content: center;
    width: 17px;
    padding-bottom: 4px;
    border-left: 1px solid #9f9f9f;
    border-right: 1px solid #c4c4c4;
}
.vscroll svg {
    width: 10px;
    height: 6px;
}

/* sheet tabs */
.sheets {
    display: flex;
    align-items: flex-start;
    width: 1322px;
    height: 28px;
    border-top: 1px solid #9f9f9f;
    font-size: 13px;
    color: #444;
}
.sheet-nav {
    display: flex;
    gap: 22px;
    width: 102px;
    padding: 9px 0 0 29px;
}
.sheet-nav svg {
    width: 6px;
    height: 10px;
}
.stab {
    height: 23px;
    line-height: 22px;
    text-align: center;
    white-space: nowrap;
}
.stab-on {
    width: 64px;
    height: 24px;
    background: #fff;
    color: #217346;
    border-bottom: 3px solid #217346;
}
.stab-line {
    margin-top: 3px;
    height: 19px;
    line-height: 18px;
    padding: 0 12px 0 11px;
    border-right: 1px solid #8f8f8f;
}
.stab-blue {
    width: 111px;
    margin: 2px 0 0 2px;
    height: 21px;
    line-height: 20px;
    background: #bdd7ee;
    color: #111;
}
.stab-orange {
    width: 58px;
    margin: 2px 3px 0 5px;
    height: 21px;
    line-height: 20px;
    background: #f4b084;
    color: #222;
    border-right: 0;
}
.stab-left {
    border-left: 1px solid #8f8f8f;
    padding-left: 12px;
}
.stab-add {
    width: 16px;
    height: 16px;
    margin: 5px 0 0 33px;
    border: 1.500px solid #8a8a8a;
    border-radius: 50%;
    color: #777;
    text-align: center;
    font: bold 14px/13px "Liberation Sans", sans-serif;
}
.hdots {
    width: 2px;
    height: 10px;
    margin: 8px 0 0 208px;
    background: repeating-linear-gradient(#a8a8a8 0 2px, transparent 2px 4px);
}
.hscroll {
    display: flex;
    width: 501px;
    height: 16px;
    margin: 4px 0 0 16px;
    background: #dcdcdc;
}
.harrow {
    display: flex;
    align-items: center;
    justify-content: center;
    width: 15px;
    background: #f4f4f4;
    border: 1px solid #b5b5b5;
}
.harrow svg {
    width: 6px;
    height: 10px;
}
.hthumb {
    width: 284px;
    background: #fff;
    border: 1px solid #bdbdbd;
}
.harrow-end {
    margin-left: auto;
}

/* field pane */
.pane {
    flex: 1;
    padding: 0 12px 0 20px;
    border-left: 1px solid #c8c8c8;
    color: #444;
}
.pane-head {
    display: flex;
    align-items: center;
    height: 47px;
    padding-left: 11px;
}
.pane-title {
    width: 193px;
    color: #217346;
    font-size: 19px;
    padding-top: 3px;
}
.caret-big {
    border-left-width: 5px;
    border-right-width: 5px;
    border-top-width: 6px;
    border-top-color: #777;
}
.pane-x {
    width: 11px;
    height: 11px;
    margin-left: 8px;
}
.pane-row {
    display: flex;
    align-items: center;
    justify-content: space-between;
    height: 26px;
}
.gear {
    display: flex;
    align-items: center;
    justify-content: center;
    gap: 10px;
    width: 43px;
    height: 26px;
    border: 1px solid #ababab;
    background: #f0f0f0;
}
.gear svg {
    width: 14px;
    height: 14px;
}
.pane-search {
    display: flex;
    align-items: center;
    justify-content: flex-end;
    height: 21px;
    margin-top: 15px;
    padding-right: 3px;
    background: #fff;
    border: 1px solid #ababab;
}
.pane-search svg {
    width: 14px;
    height: 14px;
}
.pane-list {
    height: 261px;
    margin-top: 19px;
    background: #fff;
}
.pane-drag {
    height: 38px;
    margin-top: 16px;
    padding-top: 4px;
    border-top: 1px dotted #b5b5b5;
}
.zones {
    display: grid;
    grid-template-columns: 108px 116px;
    column-gap: 8px;
}
.zone-label {
    display: flex;
    align-items: center;
    gap: 6px;
    height: 25px;
    padding: 0 0 3px 6px;
}
.zone-label svg {
    width: 12px;
    height: 14px;
}
.sigma {
    color: #8a8a8a;
    font-size: 14px;
}
.zone-box {
    height: 109px;
    background: #fff;
}
.zone-low {
    margin-top: 6px;
    padding-top: 7px;
    border-top: 1px solid #c8c8c8;
}
.zone-low .zone-label {
    height: 18px;
    padding-bottom: 0;
}
.zone-box.tall {
    height: 138px;
    padding-top: 6px;
}
.pill {
    display: flex;
    align-items: center;
    justify-content: space-between;
    height: 23px;
    margin-bottom: 2px;
    padding: 0 10px 0 6px;
    background: #fff;
    border: 1px solid #ababab;
}
.caret-dark {
    border-left-width: 4px;
    border-right-width: 4px;
    border-top-color: #111;
}
.pane-foot {
    display: flex;
    align-items: center;
    gap: 7px;
    margin-top: 3px;
    color: #888;
}
.check {
    width: 12px;
    height: 12px;
    background: #fff;
    border: 1px solid #ababab;
}

/* status bar */
.status {
    display: flex;
    align-items: center;
    height: 21px;
    background: #f0f0f0;
    color: #444;
    border-top: 1px solid #c4c4c4;
}
.status-left {
    display: flex;
    align-items: center;
    gap: 19px;
    width: 815px;
    padding-left: 9px;
}
.status-left svg {
    width: 13px;
    height: 15px;
}
.stats {
    display: flex;
    gap: 17.500px;
    width: 488px;
}
.views {
    display: flex;
}
.view {
    display: flex;
    align-items: center;
    justify-content: center;
    width: 38px;
    height: 20px;
}
.view-on {
    background: #d2d2d2;
}
.view svg {
    width: 14px;
    height: 12px;
}
.zoomer {
    display: flex;
    align-items: center;
    gap: 4px;
    padding-left: 8px;
    font-size: 13px;
}
.zoom-track {
    position: relative;
    width: 100px;
    height: 1px;
    background: #888;
}
.zoom-track i {
    position: absolute;
    left: 38px;
    top: -5px;
    width: 3px;
    height: 11px;
    background: #555;
}
.zoom-pct {
    margin-left: 18px;
    font-size: 12px;
}
.bottom-edge {
    height: 3px;
    background: #2c3a3a;
}

/* format cells dialog */
.dialog {
    position: absolute;
    left: 849px;
    top: 236px;
    width: 602px;
    height: 595px;
    background: #f0f0f0;
    border: 1px solid #6d6d6d;
    box-shadow: 0 0 22px rgba(0, 0, 0, .4);
    color: #222;
}
.dlg-title {
    display: flex;
    align-items: center;
    height: 30px;
    padding: 0 16px 2px 8px;
    background: #fff;
}
.dlg-title span {
    width: 525px;
}
.dlg-help {
    width: 40px;
    font-weight: normal;
    font-size: 13px;
}
.dlg-title svg {
    width: 12px;
    height: 12px;
}
.dlg-body {
    padding: 9px 6px 0;
}
.dlg-tab {
    position: relative;
    width: 56px;
    height: 28px;
    margin-bottom: -1px;
    background: #fff;
    border: 1px solid #d9d9d9;
    border-bottom: 0;
    text-align: center;
    line-height: 28px;
}
.dlg-panel {
    height: 476px;
    padding: 13px 8px 0;
    background: #fff;
    border: 1px solid #d9d9d9;
}
.dlg-cols {
    display: grid;
    grid-template-columns: 122px 439px;
    column-gap: 9px;
}
.dlg-label {
    height: 16px;
    line-height: 16px;
}
.cat-list {
    display: flex;
    height: 326px;
    margin-top: 4px;
    border: 1px solid #7a7a86;
    background: #fff;
}
.cat-list ul, .neg-list ul {
    flex: 1;
    list-style: none;
    margin: 0;
    padding: 2px 2px;
}
.cat-list li, .neg-list li {
    height: 17px;
    padding-left: 2px;
    line-height: 17px;
    white-space: nowrap;
}
.neg-list ul {
    padding-top: 1px;
}
.sel {
    background: #0078d7;
    color: #fff;
}
.dotted {
    outline: 1px dotted #222;
    outline-offset: -1px;
}
.list-scroll {
    display: flex;
    flex-direction: column;
    align-items: center;
    justify-content: space-between;
    width: 17px;
    padding: 7px 0 5px;
    background: #f0f0f0;
}
.list-scroll svg {
    width: 9px;
    height: 6px;
}
.dlg-right {
    padding-top: 20px;
}
.sample {
    height: 50px;
    margin: 0;
    padding: 10px 8px 0 10px;
    border: 1px solid #dcdcdc;
    line-height: 16px;
}
.sample legend {
    padding: 0 1px;
    margin-left: -5px;
    line-height: 16px;
}
.form-row {
    display: flex;
    align-items: center;
}
.decimals {
    height: 26px;
    margin-top: 5px;
}
.decimals span {
    width: 77px;
}
.spinner {
    display: flex;
    align-items: center;
    justify-content: space-between;
    width: 65px;
    height: 26px;
    padding: 0 1px 0 4px;
    border: 1px solid #a8a8a8;
}
.spin-btns {
    display: flex;
    flex-direction: column;
    gap: 1px;
    width: 16px;
}
.spin-btns i {
    display: flex;
    align-items: center;
    justify-content: center;
    height: 10.500px;
    background: #f0f0f0;
    border: 1px solid #a8a8a8;
}
.spin-btns svg {
    width: 7px;
    height: 4px;
}
.symbol {
    height: 26px;
    margin-top: 5px;
}
.symbol span {
    width: 136px;
    white-space: nowrap;
}
.select {
    display: flex;
    align-items: center;
    justify-content: space-between;
    flex: 1;
    height: 26px;
    padding-left: 3px;
    border: 1px solid #a8a8a8;
}
.select-btn {
    display: flex;
    align-items: center;
    justify-content: center;
    width: 17px;
    height: 24px;
    background: #d9d9d9;
}
.select-btn svg {
    width: 9px;
    height: 6px;
}
.neg-label {
    margin-top: 7px;
}
.neg-list {
    display: flex;
    height: 190px;
    margin-top: 5px;
    border: 1px solid #7a7a86;
}
.neg-list li {
    padding-left: 2px;
}
.red {
    color: #f00;
}
.dlg-desc {
    margin-top: 17px;
    line-height: 16px;
}
.dlg-actions {
    display: flex;
    justify-content: flex-end;
    gap: 10px;
    margin-top: 13px;
}
.btn {
    width: 74px;
    height: 29px;
    background: #e1e1e1;
    border: 1px solid #adadad;
    text-align: center;
    line-height: 27px;
}
.btn-ok {
    background: #e5f1fb;
    border: 1px solid #0078d7;
}

/* things lying over the window */
.arrows {
    position: absolute;
    left: 895px;
    top: 380px;
    width: 125px;
    height: 80px;
    filter: drop-shadow(2px 3px 2px rgba(0, 0, 0, .35));
}
.cursor {
    position: absolute;
    left: 1343px;
    top: 812px;
    width: 14px;
    height: 21px;
}
.watermark {
    position: absolute;
    left: 1187px;
    top: 937px;
    width: 413px;
    height: 99px;
    padding: 2px 0 0 11px;
    background: rgba(255, 255, 255, .78);
}
.wm-name {
    color: #f5282a;
    font: bold 43px/50px "Noto Sans CJK SC", sans-serif;
    white-space: nowrap;
}
.wm-url {
    margin-top: 9px;
    color: #2b6fd6;
    font: bold 32px/34px "Liberation Serif", serif;
    white-space: nowrap;
}
.badge {
    position: absolute;
    left: 1428px;
    top: 937px;
    width: 165px;
    height: 102px;
    padding-left: 7px;
    background: #2d7ff9;
    border-radius: 26px;
    color: #fff;
    font: bold 80px/94px "Liberation Sans", sans-serif;
    letter-spacing: -5px;
    overflow: hidden;
}
.badge-cn {
    position: absolute;
    left: 60px;
    top: 56px;
    color: rgba(70, 140, 235, .5);
    font: bold 21px/24px "Noto Sans CJK SC", sans-serif;
    letter-spacing: 0;
}
.badge-url {
    position: absolute;
    left: 58px;
    top: 84px;
    color: rgba(30, 90, 190, .6);
    font: 15px/18px "Liberation Sans", sans-serif;
    letter-spacing: 0;
}
```
